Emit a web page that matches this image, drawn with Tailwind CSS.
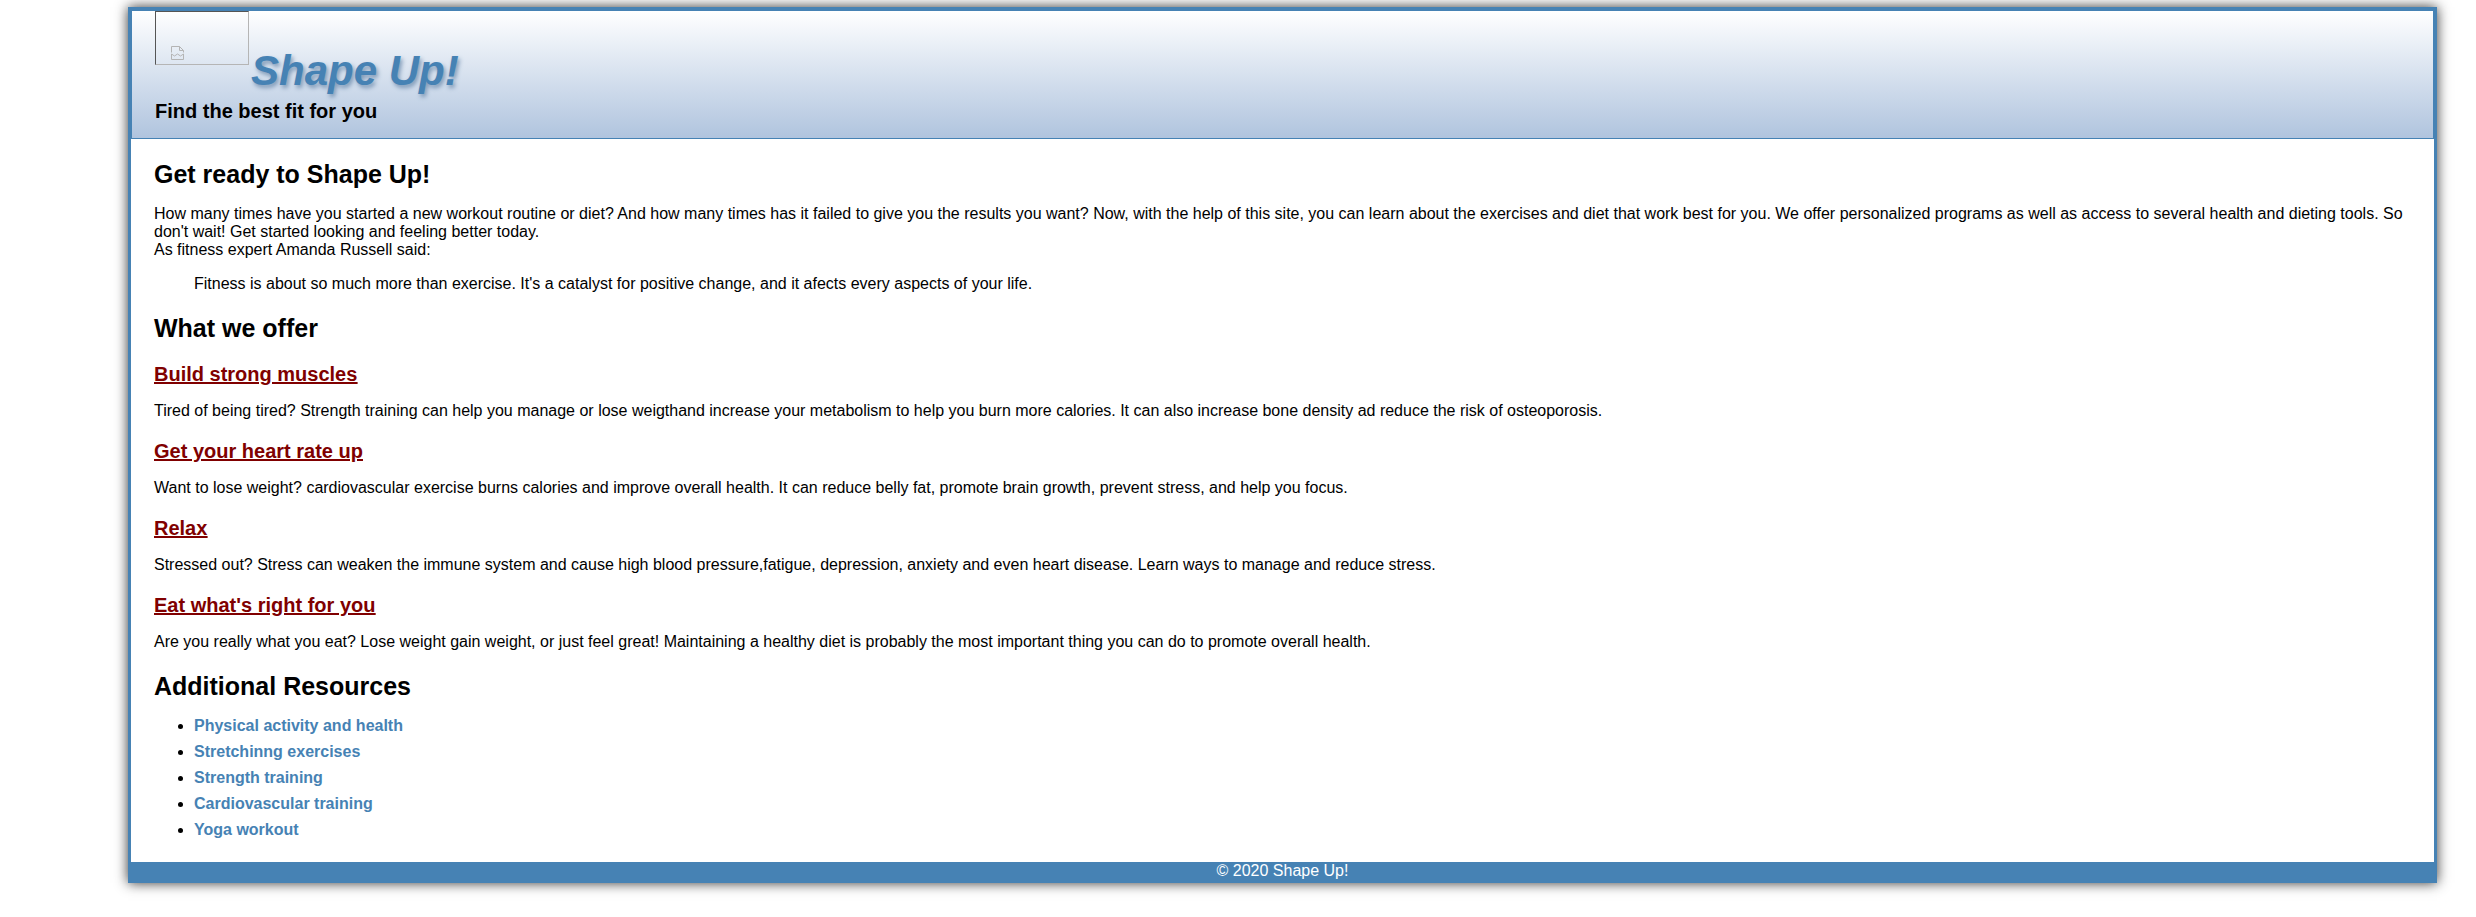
<!DOCTYPE html>
<html lang="en">
<head>
  <meta charset="UTF-8">
  <title>Shape Up!</title>
  <script src="https://cdn.jsdelivr.net/npm/@tailwindcss/browser@4"></script>
</head>
<body class="min-h-screen bg-white text-black font-['Liberation_Sans',Arial,sans-serif] text-[16px] leading-[18px]">
  <div class="ml-[128px] pt-[7px] w-[2309px]">
    <div class="border-[3px] border-[#4682b4] bg-white shadow-[0_0_12px_#333]">

      <header class="h-[129px] border border-[#4682b4] bg-gradient-to-b from-white to-[#b0c4de] pl-[23px]">
        <div class="flex items-start">
          <!-- broken logo image -->
          <div class="relative h-[54px] w-[94px] border border-t-[#555] border-l-[#555] border-r-[#b5b5b5] border-b-[#b5b5b5]">
            <svg class="absolute left-[15px] top-[34px]" width="13" height="14" viewBox="0 0 13 14" fill="none" stroke="#b4b4b4" stroke-width="1">
              <path d="M.5 6.500V.5h8l4 4v2"/>
              <path d="M8.500.5v4h4"/>
              <path d="M.5 8l3 2 3-2 3 2 3-2v5.500H.5z"/>
            </svg>
          </div>
          <h1 class="mt-[37px] ml-[2px] text-[42px] leading-[46px] font-bold italic text-[#4682b4] [text-shadow:2px_3px_4px_#7f9ab8]">Shape Up!</h1>
        </div>
        <h2 class="mt-[6px] text-[20px] leading-[23px] font-bold">Find the best fit for you</h2>
      </header>

      <main class="px-[23px] pt-[21px] pb-[19px]">
        <h2 class="text-[25px] leading-[29px] font-bold">Get ready to Shape Up!</h2>
        <p class="mt-[16px]">How many times have you started a new workout routine or diet? And how many times has it failed to give you the results you want? Now, with the help of this site, you can learn about the exercises and diet that work best for you. We offer personalized programs as well as access to several health and dieting tools. So don't wait! Get started looking and feeling better today.<br>As fitness expert Amanda Russell said:</p>
        <blockquote class="mt-[16px] ml-[40px]">Fitness is about so much more than exercise. It's a catalyst for positive change, and it afects every aspects of your life.</blockquote>

        <h2 class="mt-[21px] text-[25px] leading-[29px] font-bold">What we offer</h2>
        <h3 class="mt-[20px] text-[20px] leading-[23px] font-bold text-[#800000] underline"><a href="#">Build strong muscles</a></h3>
        <p class="mt-[16px]">Tired of being tired? Strength training can help you manage or lose weigthand increase your metabolism to help you burn more calories. It can also increase bone density ad reduce the risk of osteoporosis.</p>
        <h3 class="mt-[20px] text-[20px] leading-[23px] font-bold text-[#800000] underline"><a href="#">Get your heart rate up</a></h3>
        <p class="mt-[16px]">Want to lose weight? cardiovascular exercise burns calories and improve overall health. It can reduce belly fat, promote brain growth, prevent stress, and help you focus.</p>
        <h3 class="mt-[20px] text-[20px] leading-[23px] font-bold text-[#800000] underline"><a href="#">Relax</a></h3>
        <p class="mt-[16px]">Stressed out? Stress can weaken the immune system and cause high blood pressure,fatigue, depression, anxiety and even heart disease. Learn ways to manage and reduce stress.</p>
        <h3 class="mt-[20px] text-[20px] leading-[23px] font-bold text-[#800000] underline"><a href="#">Eat what's right for you</a></h3>
        <p class="mt-[16px]">Are you really what you eat? Lose weight gain weight, or just feel great! Maintaining a healthy diet is probably the most important thing you can do to promote overall health.</p>

        <h2 class="mt-[21px] text-[25px] leading-[29px] font-bold">Additional Resources</h2>
        <ul class="mt-[12px] ml-[40px] list-disc font-bold text-[#4682b4] marker:text-black">
          <li class="h-[26px] leading-[26px]"><a href="#">Physical activity and health</a></li>
          <li class="h-[26px] leading-[26px]"><a href="#">Stretchinng exercises</a></li>
          <li class="h-[26px] leading-[26px]"><a href="#">Strength training</a></li>
          <li class="h-[26px] leading-[26px]"><a href="#">Cardiovascular training</a></li>
          <li class="h-[26px] leading-[26px]"><a href="#">Yoga workout</a></li>
        </ul>
      </main>

      <footer class="bg-[#4682b4] text-center text-white h-[18px] leading-[18px]">© 2020 Shape Up!</footer>
    </div>
  </div>
</body>
</html>
